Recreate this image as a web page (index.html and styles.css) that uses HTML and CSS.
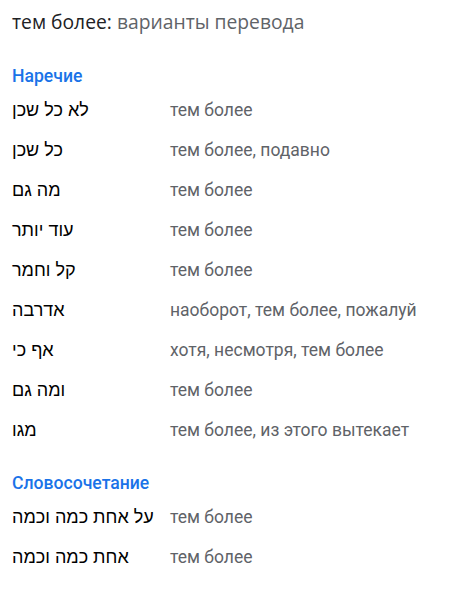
FILE: index.html
```html
<!DOCTYPE html>
<html lang="ru">
<head>
<meta charset="utf-8">
<link rel="stylesheet" href="styles.css">
</head>
<body>
<div class="page">
  <h1 class="title"><span class="term">тем более:</span> <span class="sub">варианты перевода</span></h1>

  <section class="group">
    <h2 class="pos">Наречие</h2>
    <div class="rows">
      <div class="row"><span class="src" dir="rtl">לא כל שכן</span><span class="tr">тем более</span></div>
      <div class="row"><span class="src" dir="rtl">כל שכן</span><span class="tr">тем более, подавно</span></div>
      <div class="row"><span class="src" dir="rtl">מה גם</span><span class="tr">тем более</span></div>
      <div class="row"><span class="src" dir="rtl">עוד יותר</span><span class="tr">тем более</span></div>
      <div class="row"><span class="src" dir="rtl">קל וחמר</span><span class="tr">тем более</span></div>
      <div class="row"><span class="src" dir="rtl">אדרבה</span><span class="tr">наоборот, тем более, пожалуй</span></div>
      <div class="row"><span class="src" dir="rtl">אף כי</span><span class="tr">хотя, несмотря, тем более</span></div>
      <div class="row"><span class="src" dir="rtl">ומה גם</span><span class="tr">тем более</span></div>
      <div class="row"><span class="src" dir="rtl">מגו</span><span class="tr">тем более, из этого вытекает</span></div>
    </div>
  </section>

  <section class="group">
    <h2 class="pos">Словосочетание</h2>
    <div class="rows">
      <div class="row"><span class="src" dir="rtl">על אחת כמה וכמה</span><span class="tr">тем более</span></div>
      <div class="row"><span class="src" dir="rtl">אחת כמה וכמה</span><span class="tr">тем более</span></div>
    </div>
  </section>
</div>
</body>
</html>
```

FILE: styles.css
```css
html, body {
  margin: 0;
  padding: 0;
  background: #ffffff;
}

.page {
  padding: 11px 12px 0 12px;
  font-family: Roboto, "Liberation Sans", Arial, sans-serif;
}

.title {
  margin: 0;
  font-family: "Open Sans", "Liberation Sans", sans-serif;
  font-weight: 400;
  font-size: 19.3px;
  line-height: 22px;
  color: #202124;
}

.title .sub {
  color: #5f6368;
}

.group {
  margin-top: 33px;
}

.group + .group {
  margin-top: 23px;
}

.pos {
  margin: 0 0 3px 0;
  font-size: 17.6px;
  font-weight: 500;
  line-height: 21px;
  color: #1a73e8;
}

.rows {
  display: flex;
  flex-direction: column;
}

.row {
  display: grid;
  grid-template-columns: 158px 1fr;
  align-items: center;
  height: 40px;
}

.src {
  font-family: "Liberation Sans", Arial, sans-serif;
  font-size: 18px;
  color: #000000;
  text-align: left;
  unicode-bidi: plaintext;
  justify-self: start;
}

.tr {
  font-size: 17.5px;
  color: #5f6368;
}
```
